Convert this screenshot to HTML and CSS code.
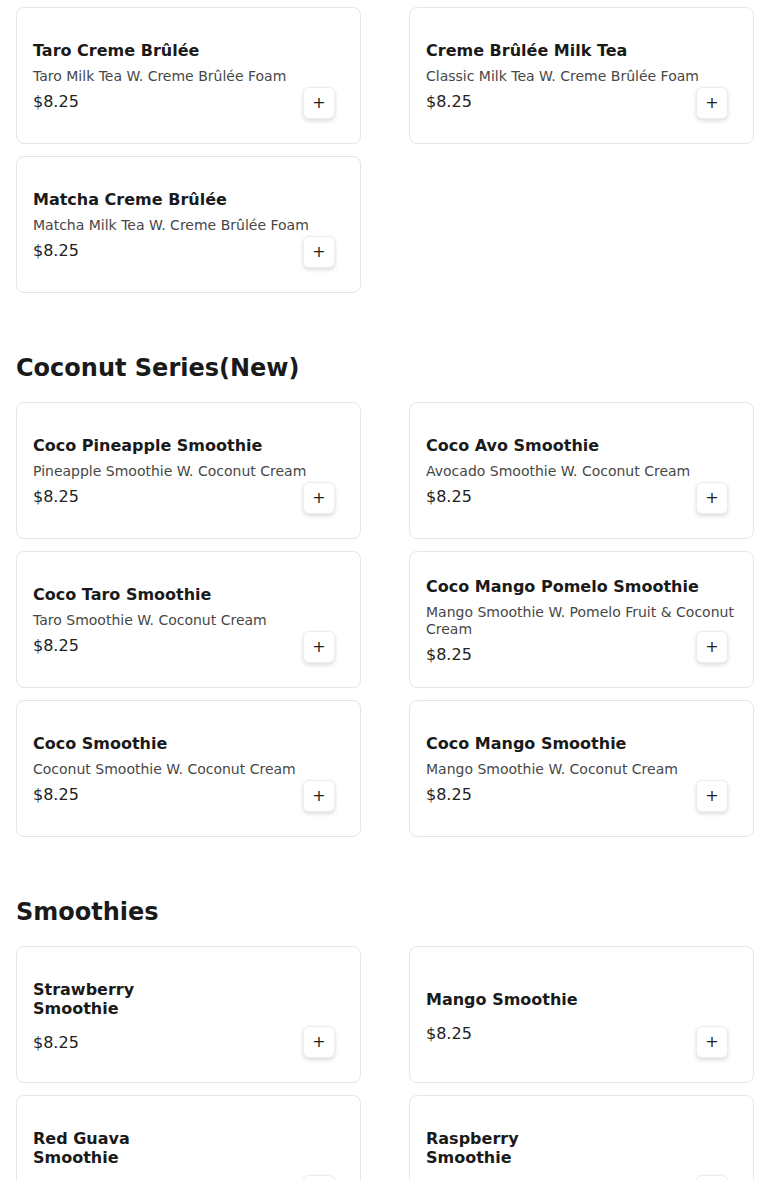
FILE: index.html
```html
<!DOCTYPE html>
<html>
<head>
<meta charset="utf-8">
<link rel="stylesheet" href="styles.css">
</head>
<body>
<main class="menu">
  <section class="section section-first">
    <div class="grid">
      <div class="card"><div class="info"><div class="title">Taro Creme Brûlée</div><div class="desc">Taro Milk Tea W. Creme Brûlée Foam</div><div class="price">$8.25</div></div><button class="add">+</button></div>
      <div class="card"><div class="info"><div class="title">Creme Brûlée Milk Tea</div><div class="desc">Classic Milk Tea W. Creme Brûlée Foam</div><div class="price">$8.25</div></div><button class="add">+</button></div>
      <div class="card"><div class="info"><div class="title">Matcha Creme Brûlée</div><div class="desc">Matcha Milk Tea W. Creme Brûlée Foam</div><div class="price">$8.25</div></div><button class="add">+</button></div>
    </div>
  </section>
  <section class="section">
    <h2 class="heading">Coconut Series(New)</h2>
    <div class="grid">
      <div class="card"><div class="info"><div class="title">Coco Pineapple Smoothie</div><div class="desc">Pineapple Smoothie W. Coconut Cream</div><div class="price">$8.25</div></div><button class="add">+</button></div>
      <div class="card"><div class="info"><div class="title">Coco Avo Smoothie</div><div class="desc">Avocado Smoothie W. Coconut Cream</div><div class="price">$8.25</div></div><button class="add">+</button></div>
      <div class="card"><div class="info"><div class="title">Coco Taro Smoothie</div><div class="desc">Taro Smoothie W. Coconut Cream</div><div class="price">$8.25</div></div><button class="add">+</button></div>
      <div class="card"><div class="info"><div class="title">Coco Mango Pomelo Smoothie</div><div class="desc">Mango Smoothie W. Pomelo Fruit &amp; Coconut Cream</div><div class="price">$8.25</div></div><button class="add">+</button></div>
      <div class="card"><div class="info"><div class="title">Coco Smoothie</div><div class="desc">Coconut Smoothie W. Coconut Cream</div><div class="price">$8.25</div></div><button class="add">+</button></div>
      <div class="card"><div class="info"><div class="title">Coco Mango Smoothie</div><div class="desc">Mango Smoothie W. Coconut Cream</div><div class="price">$8.25</div></div><button class="add">+</button></div>
    </div>
  </section>
  <section class="section">
    <h2 class="heading">Smoothies</h2>
    <div class="grid">
      <div class="card"><div class="info info-short"><div class="title title-narrow">Strawberry Smoothie</div><div class="price price-gap">$8.25</div></div><button class="add">+</button></div>
      <div class="card"><div class="info info-short"><div class="title">Mango Smoothie</div><div class="price price-gap">$8.25</div></div><button class="add">+</button></div>
      <div class="card"><div class="info info-short"><div class="title title-narrow">Red Guava Smoothie</div><div class="price price-gap">$8.25</div></div><button class="add">+</button></div>
      <div class="card"><div class="info info-short"><div class="title title-narrow">Raspberry Smoothie</div><div class="price price-gap">$8.25</div></div><button class="add">+</button></div>
    </div>
  </section>
</main>
</body>
</html>
```
FILE: styles.css
```css
* { box-sizing: border-box; }
html, body { margin: 0; padding: 0; background: #fff; }
body {
  font-family: "DejaVu Sans", Verdana, sans-serif;
  color: #1a1a1a;
}
.menu { padding: 7px 16px 40px; }
.section { margin-top: 59px; }
.section-first { margin-top: 0; }
.heading {
  margin: 0 0 18px;
  font-size: 24px;
  line-height: 32px;
  font-weight: bold;
  color: #1a1a1a;
}
.grid {
  display: grid;
  grid-template-columns: 345px 345px;
  column-gap: 48px;
  row-gap: 12px;
}
.card {
  display: grid;
  height: 137px;
  padding: 16px;
  border: 1px solid #e6e6e6;
  border-radius: 8px;
  background: #fff;
}
.info {
  grid-area: 1 / 1;
  display: flex;
  flex-direction: column;
  justify-content: center;
  padding-top: 2px;
}
.info-short { padding-top: 4px; }
.title {
  font-size: 16px;
  line-height: 19px;
  font-weight: bold;
  color: #1a1a1a;
}
.title-narrow { max-width: 150px; }
.desc {
  margin-top: 8px;
  font-size: 14px;
  line-height: 17px;
  color: #474747;
}
.price {
  margin-top: 7px;
  font-size: 16px;
  line-height: 20px;
  color: #222;
}
.price-gap { margin-top: 15px; }
.add {
  grid-area: 1 / 1;
  justify-self: end;
  align-self: end;
  margin: 0 9px 8px 0;
  width: 32px;
  height: 32px;
  padding: 0;
  border: 1px solid #ececec;
  border-radius: 6px;
  background: #fff;
  box-shadow: 0 2px 4px rgba(0,0,0,0.14);
  font-family: "DejaVu Sans", sans-serif;
  font-size: 16px;
  line-height: 30px;
  color: #222;
  text-align: center;
}
```
